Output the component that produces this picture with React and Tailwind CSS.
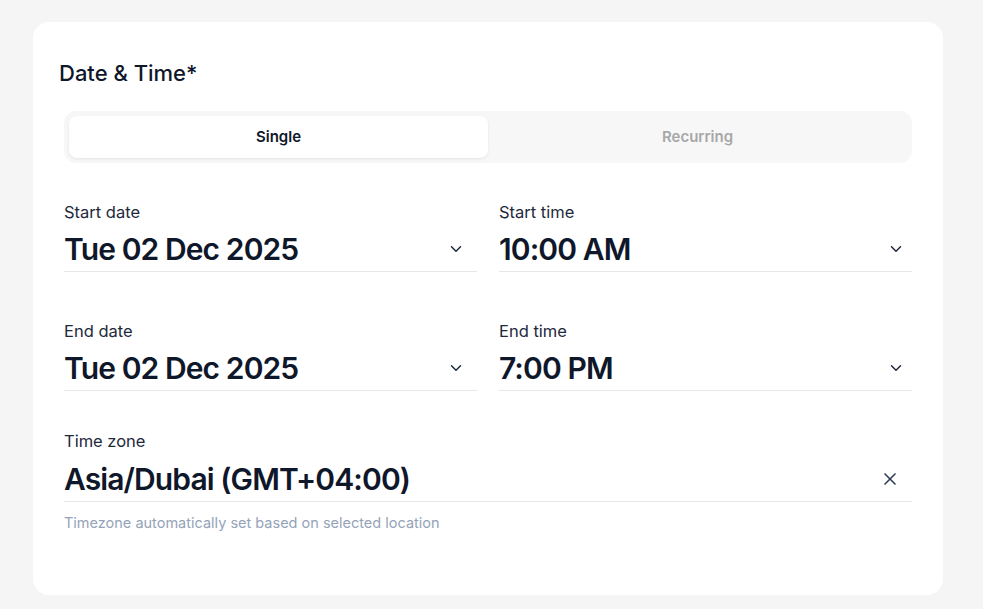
import { ChevronDown, X } from 'lucide-react';

function Field({ label, value, icon = 'chevron', iconGap = 'mr-[12px]', top = 'pt-[5px]' }) {
  return (
    <div className="flex flex-col">
      <label className="text-[16.5px] leading-6 text-[#1e293b]">{label}</label>
      <div className={`flex items-center justify-between border-b border-[#e5e7eb] ${top} pb-[2px]`}>
        <span className="text-[30px] leading-[40px] font-semibold text-[#0f172a] tracking-[-0.03em]">{value}</span>
        {icon === 'chevron' ? (
          <ChevronDown className={`${iconGap} h-[18px] w-[18px] text-[#1e293b]`} strokeWidth={2} />
        ) : (
          <X className={`${iconGap} h-[20px] w-[20px] text-[#334155]`} strokeWidth={2} />
        )}
      </div>
    </div>
  );
}

export default function App() {
  return (
    <div className="min-h-screen bg-[#f5f5f5] pt-[22px] pl-[33px] font-['Inter',sans-serif]">
      <div className="w-[910px] rounded-[16px] bg-white pt-[36px] pb-[62px] pl-[31px] pr-[31px]">
        <h2 className="-ml-[5px] text-[22px] leading-[30px] font-medium text-[#0f172a]">Date &amp; Time*</h2>

        <div className="mt-[23px] flex rounded-[12px] bg-[#f7f7f7] p-[5px]">
          <button className="h-[42px] flex-1 rounded-[8px] bg-white text-[15px] font-semibold text-[#0f172a] shadow-[0_1px_3px_rgba(0,0,0,0.08)]">
            Single
          </button>
          <button className="h-[42px] flex-1 rounded-[8px] text-[15px] font-semibold text-[#a8a8a8]">
            Recurring
          </button>
        </div>

        <div className="mt-[37px] grid grid-cols-2 gap-x-[22px] gap-y-[47px]">
          <Field label="Start date" value="Tue 02 Dec 2025" />
          <Field label="Start time" value="10:00 AM" iconGap="mr-[7px]" />
          <Field label="End date" value="Tue 02 Dec 2025" />
          <Field label="End time" value="7:00 PM" iconGap="mr-[7px]" />
        </div>

        <div className="mt-[38px]">
          <Field label="Time zone" value="Asia/Dubai (GMT+04:00)" icon="x" top="pt-[6px]" />
          <p className="mt-[11px] text-[14.5px] leading-5 text-[#94a3b8]">
            Timezone automatically set based on selected location
          </p>
        </div>
      </div>
    </div>
  );
}
